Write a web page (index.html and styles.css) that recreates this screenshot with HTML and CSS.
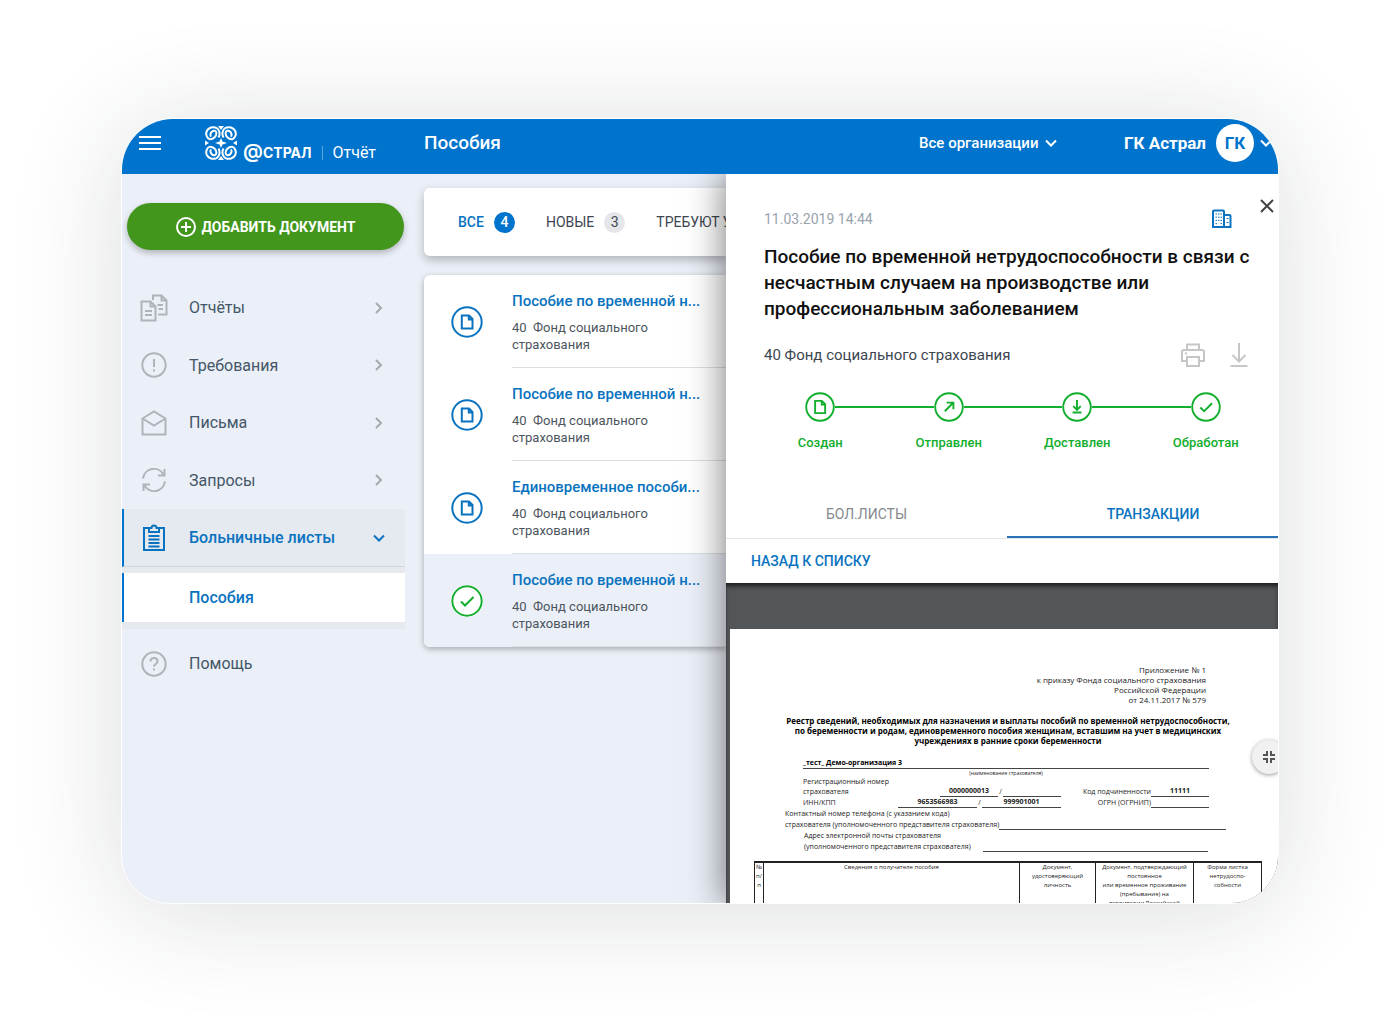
FILE: index.html
```html
<!DOCTYPE html>
<html lang="ru">
<head>
<meta charset="utf-8">
<meta name="viewport" content="width=device-width, initial-scale=1">
<title>Астрал Отчёт — Пособия</title>
<link rel="stylesheet" href="styles.css">
</head>
<body>
<svg class="sprite" aria-hidden="true">
  <symbol id="i-right" viewBox="0 0 12 12"><path d="M3 1l5 5-5 5"/></symbol>
  <symbol id="i-down" viewBox="0 0 12 12"><path d="M1 3.500l5 5 5-5"/></symbol>
  <symbol id="i-file" viewBox="0 0 32 32"><circle cx="16" cy="16" r="14.700"/><path d="M10.800 9.500h7.200l3.500 3.500v9.500h-10.700z M17.800 10v3.500h3.200"/></symbol>
  <symbol id="i-check" viewBox="0 0 32 32"><circle cx="16" cy="16" r="14.700"/><path d="M10 16.500l4 4 8.500-8.500"/></symbol>
  <symbol id="i-send" viewBox="0 0 32 32"><circle cx="16" cy="16" r="14.700"/><path d="M11.500 20.500l9-9 M13.500 11.300h7.200v7.200"/></symbol>
  <symbol id="i-deliver" viewBox="0 0 32 32"><circle cx="16" cy="16" r="14.700"/><path d="M16 8.500v10 M12 15l4 4 4-4 M11.300 21.800h9.400"/></symbol>
  <symbol id="i-curl" viewBox="0 0 16 17"><path d="M13.500 11.500C15.500 8 14.500 3.500 11.500 1.900 8 .2 3.500 1.500 1.800 5c-1.500 3.500 0 7 3 8.300M4.800 13.300c4 .2 6.800-3.500 6.600-6.300-.2-2.400-2.800-3-4.600-1.200-1.700 1.700-1.800 4.200-.4 4.600"/></symbol>
</svg>
<div class="app">
  <header class="topbar">
    <button class="icon-btn menu" aria-label="Меню"><svg viewBox="0 0 22 16"><path d="M0 2h22M0 8h22M0 14h22"/></svg></button>
    <a class="logo" href="#">
      <svg class="logo-mark" viewBox="0 0 32 34" aria-hidden="true">
        <use href="#i-curl" width="16" height="17"/>
        <use href="#i-curl" width="16" height="17" transform="translate(32 0) scale(-1 1)"/>
        <use href="#i-curl" width="16" height="17" transform="translate(0 34) scale(1 -1)"/>
        <use href="#i-curl" width="16" height="17" transform="translate(32 34) scale(-1 -1)"/>
        <path class="solid" d="M16 12l1.500 3.500 4.500 1.500-4.500 1.500-1.500 3.500-1.500-3.500-4.500-1.500 4.500-1.500zM13 0h6l-3 4zM13 34h6l-3-4zM0 14.500v5l4-2.500zM32 14.500v5l-4-2.500z"/>
      </svg>
      <span class="logo-name"><span class="logo-at">@</span>СТРАЛ</span>
      <span class="logo-product">Отчёт</span>
    </a>
    <h1 class="page-title">Пособия</h1>
    <label class="org"><select aria-label="Организация"><option>Все организации</option></select><svg class="chev"><use href="#i-down"/></svg></label>
    <button class="account"><span>ГК Астрал</span><span class="avatar">ГК</span><svg class="chev"><use href="#i-down"/></svg></button>
  </header>

  <div class="body">
    <aside class="sidebar">
      <button class="add"><svg viewBox="0 0 20 20"><circle cx="10" cy="10" r="9"/><path d="M10 5v10M5 10h10"/></svg>ДОБАВИТЬ ДОКУМЕНТ</button>
      <nav>
        <a class="nav-item" href="#"><svg class="nav-icon" viewBox="0 0 28 28"><path d="M1.500 7.500h9l5 5v14h-14z M10.500 7.500v5h5 M5 17h7M5 21h7 M13 6V1.500h8.500l5 5v14H18 M21.500 1.500v5h5 M17.500 11h5.500M18.500 15H23"/></svg>Отчёты<svg class="chev"><use href="#i-right"/></svg></a>
        <a class="nav-item" href="#"><svg class="nav-icon" viewBox="0 0 28 28"><circle cx="14" cy="14" r="11.700"/><path d="M14 8v8M14 18.500v2"/></svg>Требования<svg class="chev"><use href="#i-right"/></svg></a>
        <a class="nav-item" href="#"><svg class="nav-icon" viewBox="0 0 28 28"><path d="M2.500 9.500L14 2.500l11.500 7V25.500H2.500zM2.500 9.500l11.500 7 11.500-7"/></svg>Письма<svg class="chev"><use href="#i-right"/></svg></a>
        <a class="nav-item" href="#"><svg class="nav-icon" viewBox="0 0 28 28"><path d="M3 12.500A11 11 0 0 1 23.500 8.500M25 15.500A11 11 0 0 1 4.500 19.500M24.500 3v6.500H18M3.500 25v-6.500H10"/></svg>Запросы<svg class="chev"><use href="#i-right"/></svg></a>
        <a class="nav-item active" href="#"><svg class="nav-icon" viewBox="0 0 28 28"><path d="M9 4H4v22h20V4h-5M9 4h2.500a2.500 2.500 0 0 1 5 0H19v4H9zM8.500 12h11M8.500 15.500h11M8.500 19h11M8.500 22.500h11"/></svg>Больничные листы<svg class="chev"><use href="#i-down"/></svg></a>
        <div class="subnav"><a href="#">Пособия</a></div>
        <a class="nav-item" href="#"><svg class="nav-icon" viewBox="0 0 28 28"><circle cx="14" cy="14" r="11.700"/><path d="M10.500 11.500c0-4.700 7-4.700 7 0 0 2.500-3.500 2.500-3.500 5M14 18.500v2"/></svg>Помощь</a>
      </nav>
    </aside>

    <main class="list-pane">
      <div class="filters">
        <button class="filter current">ВСЕ <span class="count">4</span></button>
        <button class="filter">НОВЫЕ <span class="count">3</span></button>
        <button class="filter">ТРЕБУЮТ У</button>
      </div>
      <ul class="cards">
        <li class="card"><svg class="status"><use href="#i-file"/></svg><div class="card-text"><a href="#">Пособие по временной н...</a><p>40 &nbsp;Фонд социального<br>страхования</p></div></li>
        <li class="card"><svg class="status"><use href="#i-file"/></svg><div class="card-text"><a href="#">Пособие по временной н...</a><p>40 &nbsp;Фонд социального<br>страхования</p></div></li>
        <li class="card"><svg class="status"><use href="#i-file"/></svg><div class="card-text"><a href="#">Единовременное пособи...</a><p>40 &nbsp;Фонд социального<br>страхования</p></div></li>
        <li class="card selected"><svg class="status done"><use href="#i-check"/></svg><div class="card-text"><a href="#">Пособие по временной н...</a><p>40 &nbsp;Фонд социального<br>страхования</p></div></li>
      </ul>
    </main>

    <section class="detail">
      <button class="icon-btn close" aria-label="Закрыть"><svg viewBox="0 0 14 14"><path d="M1 1l12 12M13 1L1 13"/></svg></button>
      <div class="detail-head">
        <div class="meta"><time datetime="2019-03-11T14:44">11.03.2019 14:44</time>
          <svg class="building" viewBox="0 0 20 20"><path class="frame" d="M2 1.500h9q1 0 1 1v15.500H1V2.500q0-1 1-1zM12 6h5.500q1 0 1 1v11H12"/><path class="dots" d="M3.500 5h1.500M6 5h1.500M8.500 5h1.500M3.500 8.200h1.500M6 8.200h1.500M8.500 8.200h1.500M3.500 11.400h1.500M6 11.400h1.500M8.500 11.400h1.500M3.500 14.600h1.500M8.500 14.600h1.500M14.500 9.500h2M14.500 13.500h2"/></svg></div>
        <h2>Пособие по временной нетрудоспособности в связи с несчастным случаем на производстве или профессиональным заболеванием</h2>
        <div class="fund"><span>40 Фонд социального страхования</span>
          <button class="icon-btn" aria-label="Печать"><svg class="tool" viewBox="0 0 24 24"><path d="M6 7V1.500h12V7M6 18H1V9q0-2 2-2h18q2 0 2 2v9h-5M6 14h12v9H6zM4 10.500h2"/></svg></button>
          <button class="icon-btn" aria-label="Скачать"><svg class="tool" viewBox="0 0 24 24"><path d="M12 0v18M5.500 12l6.500 6.500 6.500-6.500M3.500 23h17"/></svg></button>
        </div>
        <ol class="steps">
          <li><svg><use href="#i-file"/></svg><span>Создан</span></li>
          <li><svg><use href="#i-send"/></svg><span>Отправлен</span></li>
          <li><svg><use href="#i-deliver"/></svg><span>Доставлен</span></li>
          <li><svg><use href="#i-check"/></svg><span>Обработан</span></li>
        </ol>
      </div>
      <div class="tabs"><button>БОЛ.ЛИСТЫ</button><button class="current">ТРАНЗАКЦИИ</button></div>
      <a class="back" href="#">НАЗАД К СПИСКУ</a>
      <div class="viewer">
        <article class="sheet">
          <p class="annex">Приложение № 1<br>к приказу Фонда социального страхования<br>Российской Федерации<br>от 24.11.2017 № 579</p>
          <h3>Реестр сведений, необходимых для назначения и выплаты пособий по временной нетрудоспособности,<br>по беременности и родам, единовременного пособия женщинам, вставшим на учет в медицинских<br>учреждениях в ранние сроки беременности</h3>
          <div class="form">
            <div class="org-name">_тест_ Демо-организация 3</div>
            <small>(наименование страхователя)</small>
            <div class="row"><span>Регистрационный номер<br>страхователя</span><b class="blank mid">0000000013</b><i>/</i><b class="blank mid"></b><span class="code">Код подчиненности</span><b class="blank mid">11111</b></div>
            <div class="row"><span>ИНН/КПП</span><b class="blank wide">9653566983</b><i>/</i><b class="blank wide">999901001</b><span class="code">ОГРН (ОГРНИП)</span><b class="blank mid"></b></div>
          </div>
          <div class="contact phone"><span>Контактный номер телефона (с указанием кода)<br>страхователя (уполномоченного представителя страхователя)</span><b class="blank"></b></div>
          <div class="contact mail"><span>Адрес электронной почты страхователя<br>(уполномоченного представителя страхователя)</span><b class="blank"></b></div>
          <table>
            <colgroup><col class="c-num"><col><col class="c-doc"><col class="c-proof"><col class="c-form"></colgroup>
            <tr><th>№<br>п/<br>п</th><th>Сведения о получателе пособия</th><th>Документ,<br>удостоверяющий<br>личность</th><th>Документ, подтверждающий<br>постоянное<br>или временное проживание<br>(пребывание) на<br>территории Российской</th><th>Форма листка<br>нетрудоспо-<br>собности</th></tr>
          </table>
        </article>
      </div>
      <button class="shrink" aria-label="Свернуть"><svg viewBox="0 0 12 12"><path d="M4 0v4H0M8 0v4h4M4 12V8H0M8 12V8h4"/></svg></button>
    </section>
  </div>
</div>
</body>
</html>
```
FILE: styles.css
```css
* { box-sizing: border-box; margin: 0; padding: 0; }
:root { --blue: #0073cc; --link: #0a73c0; --green: #12ae2e; --bg: #ebeff7; }
body {
  min-height: 100vh;
  padding: 118px 121px 124px;
  background: #fff;
  font-family: Roboto, "Liberation Sans", sans-serif;
  color: #3c4650;
}
button, select { font: inherit; color: inherit; background: none; border: 0; cursor: pointer; }
a { color: inherit; text-decoration: none; }
ul, ol { list-style: none; }
svg { fill: none; stroke: currentColor; stroke-width: 2; flex: none; }
.sprite { display: none; }
.icon-btn { display: flex; }
.chev { width: 12px; height: 12px; }

.app {
  display: flex;
  flex-direction: column;
  height: calc(100vh - 242px);
  min-height: 560px;
  overflow: hidden;
  border: 1px solid #fff;
  border-radius: 52px 52px 48px 48px;
  background: var(--bg);
  box-shadow: 0 8px 110px rgba(40, 44, 52, .16);
}

.topbar {
  display: flex;
  align-items: center;
  flex: none;
  height: 55px;
  padding: 0 6px 8px 17px;
  background: var(--blue);
  color: #fff;
  white-space: nowrap;
}
.menu svg { width: 22px; height: 16px; }
.logo { display: flex; align-items: flex-end; width: 219px; margin-left: 44px; }
.logo-mark { width: 32px; height: 34px; stroke-width: 2; }
.logo-mark .solid { fill: currentColor; stroke: none; }
.logo-name { display: flex; align-items: baseline; margin-left: 6px; font: 700 14px/14px Inter, sans-serif; }
.logo-at { font-size: 20px; font-weight: 600; }
.logo-product { margin-left: 10px; padding-left: 10px; border-left: 1px solid #5aa7e0; font-size: 16px; line-height: 14px; }
.page-title { flex: 1; font-size: 19px; font-weight: 500; }
.org { display: flex; align-items: center; gap: 6px; margin-right: 67px; font-size: 15px; font-weight: 500; }
.org select { appearance: none; }
.account { display: flex; align-items: center; gap: 10px; font-size: 17px; font-weight: 700; }
.account .chev { margin-left: -4px; }
.avatar { width: 38px; border-radius: 50%; background: #fff; color: var(--blue); line-height: 38px; text-align: center; }

.body { display: flex; flex: 1; min-height: 0; }

.sidebar { flex: 0 0 283px; padding-top: 29px; }
.add {
  display: flex;
  align-items: center;
  justify-content: center;
  gap: 6px;
  width: 277px;
  height: 47px;
  margin: 0 0 29px 5px;
  border-radius: 24px;
  background: #41961b;
  box-shadow: 0 3px 6px rgba(0, 0, 0, .25);
  color: #fff;
  font-size: 14px;
  font-weight: 700;
}
.add svg { width: 20px; height: 20px; }
.nav-item { display: flex; align-items: center; height: 57px; padding: 0 20px 0 18px; font-size: 16px; color: #435768; }
.nav-item:nth-child(even) { height: 58px; }
.nav-icon { width: 28px; height: 28px; margin-right: 21px; color: #b0b4ba; stroke-width: 2; }
.nav-item .chev { margin-left: auto; color: #a4a9ae; }
.nav-item.active {
  height: 58px;
  padding-left: 16px;
  border-left: 2px solid var(--blue);
  border-bottom: 1px solid #d0d4dc;
  background: #e5e9f0;
  color: var(--link);
  font-weight: 500;
}
.active .nav-icon, .nav-item.active .chev { color: var(--link); }
.subnav { padding: 6px 0 7px; margin-bottom: 6px; background: #e6e9ee; }
.subnav a { display: block; padding-left: 65px; border-left: 2px solid var(--blue); background: #fff; color: var(--link); font-size: 16px; font-weight: 500; line-height: 49px; }

.list-pane { flex: 1; min-width: 0; padding: 14px 0 0 19px; }
.filters {
  display: flex;
  align-items: center;
  gap: 31px;
  height: 68px;
  margin-bottom: 19px;
  padding-left: 34px;
  overflow: hidden;
  border-radius: 6px 0 0 6px;
  background: #fff;
  box-shadow: 0 4px 10px rgba(0, 0, 0, .25);
  font-size: 14px;
  white-space: nowrap;
}
.filter { display: flex; align-items: center; gap: 10px; }
.filter.current { color: var(--link); font-weight: 500; }
.count { width: 21px; border-radius: 50%; background: #e5e6e9; line-height: 21px; text-align: center; }
.current .count { background: var(--blue); color: #fff; }
.cards { border-radius: 6px 0 0 6px; background: #fff; box-shadow: 0 2px 6px rgba(0, 0, 0, .3); white-space: nowrap; }
.card { display: flex; align-items: center; gap: 29px; padding-left: 27px; }
.status { width: 32px; height: 32px; color: var(--link); }
.status.done { color: var(--green); }
.card-text { flex: 1; min-width: 0; padding: 16px 0 14px; border-bottom: 1px solid #dcdfe3; }
.card-text a { color: var(--link); font-size: 15px; font-weight: 500; line-height: 20px; }
.card-text p { margin-top: 8px; font-size: 13px; line-height: 17px; color: #4c555d; }
.selected { border-radius: 0 0 0 6px; background: var(--bg); }
.selected .status { background: #fff; border-radius: 50%; }

.detail {
  position: relative;
  display: flex;
  flex-direction: column;
  flex: 0 0 552px;
  min-width: 0;
  background: #fff;
  box-shadow: 0 0 34px 2px rgba(0, 0, 0, .5);
  clip-path: inset(0 0 0 -60px);
}
.close { position: absolute; top: 25px; right: 4px; color: #444; }
.close svg { width: 14px; height: 14px; stroke-width: 2; }
.detail-head { padding: 35px 20px 0 38px; }
.meta { display: flex; align-items: center; justify-content: space-between; padding-right: 26px; color: #98a3ad; font-size: 14px; line-height: 20px; }
.building { width: 20px; height: 20px; color: var(--link); }
.frame { stroke-width: 2; }
.dots { stroke-width: 1; }
.detail h2 { margin-top: 15px; color: #111; font-size: 19px; font-weight: 500; line-height: 26px; }
.fund { display: flex; align-items: center; gap: 22px; margin-top: 21px; padding-right: 7px; font-size: 15px; }
.fund span { flex: 1; }
.tool { width: 24px; height: 24px; color: #c4c6c8; stroke-width: 2; }
.steps { display: flex; margin: 24px -12px 0 -8px; color: var(--green); font-size: 13px; font-weight: 500; text-align: center; }
.steps li { display: grid; flex: 1; grid-template-columns: 1fr 30px 1fr; align-items: center; }
.steps li::before, .steps li::after { content: ""; grid-row: 1; height: 2px; background: var(--green); }
.steps li::before { grid-column: 1; }
.steps li::after { grid-column: 3; }
.steps li:first-child::before, .steps li:last-child::after { background: none; }
.steps svg { grid-area: 1 / 2; width: 30px; height: 32px; }
.steps span { grid-area: 2 / 1 / 3 / 4; margin-top: 10px; line-height: 20px; }
.tabs { display: flex; margin-top: 39px; border-bottom: 1px solid #e2e4e6; overflow: hidden; flex: none; }
.tabs button { flex: 0 0 281px; height: 46px; border-bottom: 2px solid transparent; color: #868a8e; font-size: 14px; }
.tabs .current { flex-basis: 292px; border-color: #2a71b8; color: var(--link); font-weight: 500; }
.back { padding-left: 25px; color: var(--link); font-size: 14px; font-weight: 500; line-height: 44px; }

.viewer {
  flex: 1;
  min-height: 0;
  overflow: hidden;
  padding: 46px 0 0 4px;
  background: #525659;
  box-shadow: inset 0 4px 4px -1px #1c1e1f;
}
.sheet {
  height: 100%;
  padding: 36px 16px 0 24px;
  overflow: hidden;
  background: #fff;
  color: #222;
  font: 7px/10px "Open Sans", "Noto Sans", sans-serif;
}
.annex { padding-right: 56px; font-size: 8px; text-align: right; }
.sheet h3 { margin-top: 11px; color: #000; font-size: 8px; text-align: center; white-space: nowrap; }
.form { padding: 12px 53px 0 49px; }
.org-name { border-bottom: 1px solid #444; color: #000; font-weight: 700; }
.form small { display: block; font-size: 5px; line-height: 8px; text-align: center; }
.row { display: flex; align-items: flex-end; line-height: 10px; }
.row span { flex: 1; white-space: nowrap; }
.row .code { flex: 0 0 90px; text-align: right; }
.row i { width: 5px; font-style: normal; text-align: center; }
.blank { border-bottom: 1px solid #444; text-align: center; min-height: 10px; }
.mid { width: 58px; }
.wide { width: 79px; }
.contact { display: flex; align-items: flex-end; line-height: 11px; white-space: nowrap; }
.contact .blank { flex: 1; }
.phone { padding: 0 36px 0 31px; }
.mail { padding: 0 54px 0 50px; }
.mail .blank { margin-left: 12px; }
.sheet table { width: 100%; margin-top: 9px; border-collapse: collapse; table-layout: fixed; }
.sheet th { border: 1px solid #222; border-top-width: 2px; border-bottom: 0; height: 60px; vertical-align: top; font-size: 6px; font-weight: 400; line-height: 9px; white-space: nowrap; }
.c-num { width: 9px; }
.c-doc { width: 76px; }
.c-proof { width: 98px; }
.c-form { width: 68px; }

.shrink {
  position: absolute;
  top: 566px;
  right: -8px;
  display: grid;
  place-items: center;
  width: 34px;
  height: 34px;
  border-radius: 50%;
  background: #f1f1f1;
  box-shadow: 0 1px 4px rgba(0, 0, 0, .4);
  color: #555;
}
.shrink svg { width: 12px; height: 12px; }
```
